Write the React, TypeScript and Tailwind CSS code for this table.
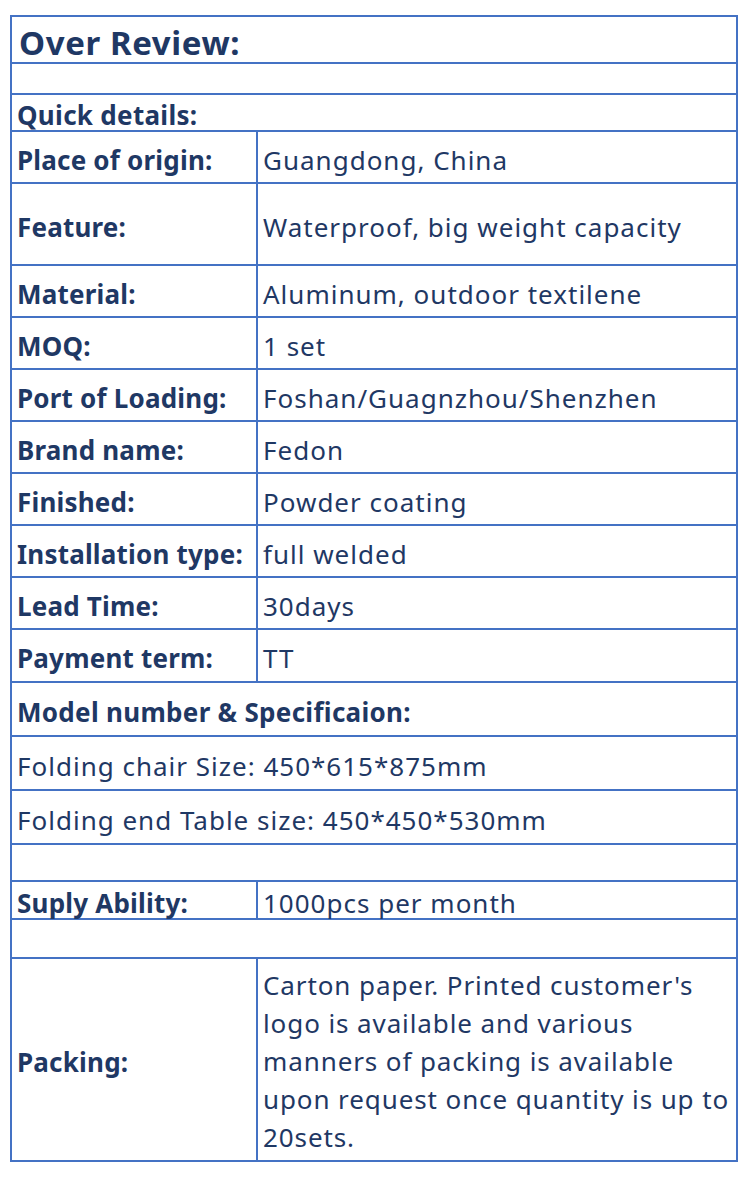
import React from 'react';

type Row =
  | { kind: 'full'; text?: string; bold?: boolean; h: number; big?: boolean }
  | { kind: 'pair'; label: string; value: string; h: number };

const rows: Row[] = [
  { kind: 'full', text: 'Over Review:', bold: true, big: true, h: 47 },
  { kind: 'full', h: 31 },
  { kind: 'full', text: 'Quick details:', bold: true, h: 37 },
  { kind: 'pair', label: 'Place of origin:', value: 'Guangdong, China', h: 52 },
  { kind: 'pair', label: 'Feature:', value: 'Waterproof, big weight capacity', h: 82 },
  { kind: 'pair', label: 'Material:', value: 'Aluminum, outdoor textilene', h: 52 },
  { kind: 'pair', label: 'MOQ:', value: '1 set', h: 52 },
  { kind: 'pair', label: 'Port of Loading:', value: 'Foshan/Guagnzhou/Shenzhen', h: 52 },
  { kind: 'pair', label: 'Brand name:', value: 'Fedon', h: 52 },
  { kind: 'pair', label: 'Finished:', value: 'Powder coating', h: 52 },
  { kind: 'pair', label: 'Installation type:', value: 'full welded', h: 52 },
  { kind: 'pair', label: 'Lead Time:', value: '30days', h: 52 },
  { kind: 'pair', label: 'Payment term:', value: 'TT', h: 53 },
  { kind: 'full', text: 'Model number & Specificaion:', bold: true, h: 54 },
  { kind: 'full', text: 'Folding chair Size: 450*615*875mm', h: 54 },
  { kind: 'full', text: 'Folding end Table size: 450*450*530mm', h: 54 },
  { kind: 'full', h: 37 },
  { kind: 'pair', label: 'Suply Ability:', value: '1000pcs per month', h: 38 },
  { kind: 'full', h: 39 },
];

const cell = 'border-2 border-[#4472c4] align-middle px-[5px] pt-[5px] pb-0';

export default function App() {
  return (
    <div
      className="bg-white min-h-[1178px] pl-[10px] pt-[15px] text-[#1f3864] tracking-[1px]"
      style={{ fontFamily: '"Noto Sans", "Open Sans", sans-serif' }}
    >
      <table className="border-collapse w-[728px] text-[26px] leading-[30px] table-fixed">
        <colgroup>
          <col className="w-[246px]" />
          <col />
        </colgroup>
        <tbody>
          {rows.map((r, i) =>
            r.kind === 'full' ? (
              <tr key={i} style={{ height: r.h }}>
                <td
                  colSpan={2}
                  className={`${cell} ${r.bold ? 'font-bold' : 'font-normal'} ${
                    r.big ? 'text-[33px] pl-[7px] !pt-[6px] tracking-[0.6px]' : ''
                  } ${r.bold && !r.big ? 'tracking-[0.3px]' : ''}`}
                >
                  {r.text ?? ''}
                </td>
              </tr>
            ) : (
              <tr key={i} style={{ height: r.h }}>
                <td className={`${cell} font-bold tracking-[0.2px]`}>{r.label}</td>
                <td className={cell}>{r.value}</td>
              </tr>
            )
          )}
          <tr style={{ height: 203 }}>
            <td className={`${cell} font-bold tracking-[0.2px]`}>Packing:</td>
            <td className={`${cell} !pt-[2px] !pr-0 leading-[38px] tracking-[0.9px]`}>
              Carton paper. Printed customer's logo is available and various manners of packing is
              available upon request once quantity is up to 20sets.
            </td>
          </tr>
        </tbody>
      </table>
    </div>
  );
}
